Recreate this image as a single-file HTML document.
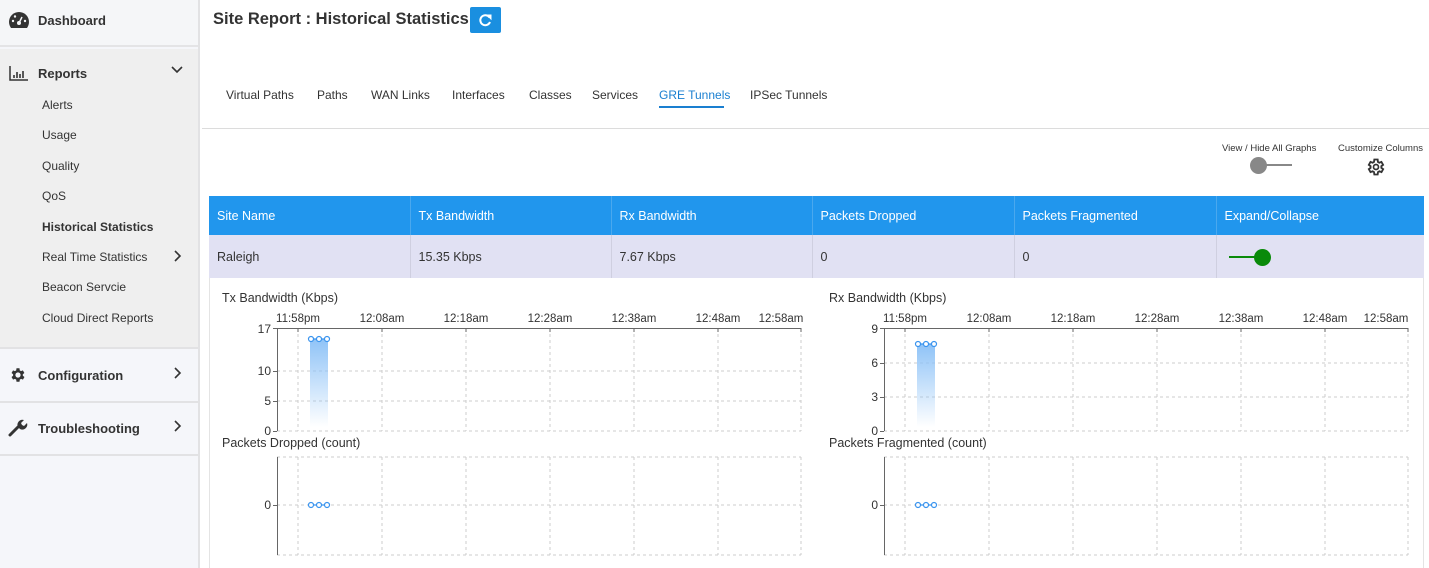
<!DOCTYPE html>
<html><head><meta charset="utf-8"><style>
*{margin:0;padding:0;box-sizing:border-box}
body{width:1429px;height:568px;overflow:hidden;font-family:"Liberation Sans",sans-serif;background:#fff;position:relative;color:#333}
.a{position:absolute;white-space:nowrap}
.sb{position:absolute;left:0;top:0;width:200px;height:568px;background:#f5f6fa;border-right:2px solid #e2e2e4}
.sub{font-size:12px;color:#333;left:42px}
.hd{font-size:13px;font-weight:bold;color:#333;left:38px}
.tab{font-size:12px;color:#333;top:88px}
th,td{font-size:12.5px;text-align:left;padding-left:8px;font-weight:normal}
</style></head><body>
<div class="sb">
 <div class="a" style="left:0;top:0;width:198px;height:47px;background:#f5f6f8;border-bottom:2px solid #e4e4e6"></div>
 <div class="a" style="left:0;top:49px;width:198px;height:300px;background:#efefef;border-bottom:2px solid #e2e2e4"></div>
 <div class="a" style="left:0;top:401px;width:198px;height:2px;background:#e2e2e4"></div>
 <div class="a" style="left:0;top:454px;width:198px;height:2px;background:#e2e2e4"></div>
 <svg class="a" style="left:8px;top:10px" width="22" height="20" viewBox="0 0 22 20"><path d="M11 2A10 10 0 0 0 1 12c0 2.5 1 4.5 2 6h16c1-1.5 2-3.5 2-6A10 10 0 0 0 11 2z" fill="#333"/><circle cx="11" cy="13" r="2" fill="#f5f6f8"/><path d="M11 13l3-6" stroke="#f5f6f8" stroke-width="1.5"/><circle cx="5" cy="11" r="1.2" fill="#f5f6f8"/><circle cx="7" cy="6.5" r="1.2" fill="#f5f6f8"/><circle cx="17" cy="11" r="1.2" fill="#f5f6f8"/></svg>
 <div class="a hd" style="top:13px">Dashboard</div>
 <svg class="a" style="left:9px;top:66px" width="19" height="15" viewBox="0 0 19 15"><path d="M1 0v14h18" stroke="#333" stroke-width="1.5" fill="none"/><path d="M5 12v-3M8 12v-6M11 12v-4M14 12v-7" stroke="#333" stroke-width="1.6"/></svg>
 <div class="a hd" style="top:66px">Reports</div>
 <svg class="a" style="left:171px;top:66px" width="12" height="8"><path d="M1 1l5 5 5-5" stroke="#333" stroke-width="1.6" fill="none"/></svg>
 <div class="a sub" style="top:98px">Alerts</div>
 <div class="a sub" style="top:128px">Usage</div>
 <div class="a sub" style="top:159px">Quality</div>
 <div class="a sub" style="top:189px">QoS</div>
 <div class="a sub" style="top:220px;font-weight:bold">Historical Statistics</div>
 <div class="a sub" style="top:250px">Real Time Statistics</div>
 <svg class="a" style="left:174px;top:250px" width="8" height="12"><path d="M1 1l5 5-5 5" stroke="#333" stroke-width="1.6" fill="none"/></svg>
 <div class="a sub" style="top:280px">Beacon Servcie</div>
 <div class="a sub" style="top:311px">Cloud Direct Reports</div>
 <svg class="a" style="left:9px;top:366px" width="18" height="18" viewBox="0 0 24 24"><path fill="#333" d="M19.4 13a7.5 7.5 0 0 0 0-2l2.1-1.6-2-3.5-2.5 1a7.6 7.6 0 0 0-1.7-1L15 3h-4l-.4 2.9a7.6 7.6 0 0 0-1.7 1l-2.5-1-2 3.5L6.5 11a7.5 7.5 0 0 0 0 2l-2.1 1.6 2 3.5 2.5-1a7.6 7.6 0 0 0 1.7 1L11 21h4l.4-2.9a7.6 7.6 0 0 0 1.7-1l2.5 1 2-3.5zM13 15.5a3.5 3.5 0 1 1 0-7 3.5 3.5 0 0 1 0 7z" transform="translate(-1 0)"/></svg>
 <div class="a hd" style="top:368px">Configuration</div>
 <svg class="a" style="left:174px;top:367px" width="8" height="12"><path d="M1 1l5 5-5 5" stroke="#333" stroke-width="1.6" fill="none"/></svg>
 <svg class="a" style="left:8px;top:418px" width="20" height="20" viewBox="0 0 20 20"><path d="M2 17l8-8" stroke="#333" stroke-width="3" stroke-linecap="round"/><path d="M10 9a5 5 0 0 1 6-7l-3 3 1 2 2 1 3-3a5 5 0 0 1-7 6z" fill="#333"/></svg>
 <div class="a hd" style="top:421px">Troubleshooting</div>
 <svg class="a" style="left:174px;top:420px" width="8" height="12"><path d="M1 1l5 5-5 5" stroke="#333" stroke-width="1.6" fill="none"/></svg>
</div>

<div class="a" style="left:213px;top:10px;font-size:16.5px;font-weight:bold;color:#333">Site Report : Historical Statistics</div>
<div class="a" style="left:470px;top:7px;width:31px;height:26px;background:#1a8fe0;border-radius:2px"></div>
<svg class="a" style="left:477px;top:12px" width="17" height="17" viewBox="0 0 17 17"><path d="M12.5 5.5A5 5 0 1 0 13 10" stroke="#fff" stroke-width="2" fill="none"/><path d="M10 3h4v4z" fill="#fff" stroke="#fff"/></svg>

<div class="a tab" style="left:226px">Virtual Paths</div>
<div class="a tab" style="left:317px">Paths</div>
<div class="a tab" style="left:371px">WAN Links</div>
<div class="a tab" style="left:452px">Interfaces</div>
<div class="a tab" style="left:529px">Classes</div>
<div class="a tab" style="left:592px">Services</div>
<div class="a tab" style="left:659px;color:#1a7fd0">GRE Tunnels</div>
<div class="a" style="left:659px;top:106px;width:65px;height:2px;background:#1a7fd0"></div>
<div class="a tab" style="left:750px">IPSec Tunnels</div>
<div class="a" style="left:202px;top:128px;width:1227px;height:1px;background:#dcdcdc"></div>

<div class="a" style="left:1222px;top:143px;font-size:9.5px;color:#333">View / Hide All Graphs</div>
<div class="a" style="left:1258px;top:164px;width:34px;height:2px;background:#888"></div>
<div class="a" style="left:1250px;top:157px;width:17px;height:17px;border-radius:50%;background:#888"></div>
<div class="a" style="left:1338px;top:143px;font-size:9.5px;color:#333">Customize Columns</div>
<svg class="a" style="left:1366px;top:157px" width="20" height="20" viewBox="0 0 24 24"><path fill="none" stroke="#333" stroke-width="2.2" d="M19.4 13a7.5 7.5 0 0 0 0-2l2.1-1.6-2-3.5-2.5 1a7.6 7.6 0 0 0-1.7-1L15 3h-4l-.4 2.9a7.6 7.6 0 0 0-1.7 1l-2.5-1-2 3.5L6.5 11a7.5 7.5 0 0 0 0 2l-2.1 1.6 2 3.5 2.5-1a7.6 7.6 0 0 0 1.7 1L11 21h4l.4-2.9a7.6 7.6 0 0 0 1.7-1l2.5 1 2-3.5z" transform="translate(-1 0)"/><circle cx="12" cy="12" r="3" fill="none" stroke="#333" stroke-width="2"/></svg>

<table class="a" style="left:209px;top:196px;width:1215px;border-collapse:collapse;table-layout:fixed">
<tr style="background:#2196ed;color:#fff;height:39px"><th style="width:201px">Site Name</th><th style="width:201px;border-left:1px solid #4aa8ee">Tx Bandwidth</th><th style="width:201px;border-left:1px solid #4aa8ee">Rx Bandwidth</th><th style="width:202px;border-left:1px solid #4aa8ee">Packets Dropped</th><th style="width:202px;border-left:1px solid #4aa8ee">Packets Fragmented</th><th style="border-left:1px solid #4aa8ee">Expand/Collapse</th></tr>
<tr style="background:#e1e1f3;height:43px"><td>Raleigh</td><td style="border-left:1px solid #cfcfe0">15.35 Kbps</td><td style="border-left:1px solid #cfcfe0">7.67 Kbps</td><td style="border-left:1px solid #cfcfe0">0</td><td style="border-left:1px solid #cfcfe0">0</td><td style="border-left:1px solid #cfcfe0"></td></tr>
</table>
<div class="a" style="left:1229px;top:256px;width:30px;height:2px;background:#0a8a0a"></div>
<div class="a" style="left:1254px;top:249px;width:17px;height:17px;border-radius:50%;background:#0a8a0a"></div>
<div class="a" style="left:209px;top:278px;width:1px;height:290px;background:#e4e4e4"></div>
<div class="a" style="left:1423px;top:278px;width:1px;height:290px;background:#e4e4e4"></div>

<svg class="a" style="left:0;top:0" width="1429" height="568" font-family="Liberation Sans, sans-serif">
<defs><linearGradient id="g" x1="0" y1="0" x2="0" y2="1"><stop offset="0" stop-color="#8fc3f7"/><stop offset="1" stop-color="#8fc3f7" stop-opacity="0"/></linearGradient></defs>
<g font-size="12.5" fill="#333">
<text x="222" y="302">Tx Bandwidth (Kbps)</text>
<text x="222" y="447">Packets Dropped (count)</text>
<text x="829" y="302">Rx Bandwidth (Kbps)</text>
<text x="829" y="447">Packets Fragmented (count)</text>
</g>
<g font-size="11.5" fill="#333" text-anchor="middle">
<text x="298" y="322">11:58pm</text><text x="382" y="322">12:08am</text><text x="466" y="322">12:18am</text><text x="550" y="322">12:28am</text><text x="634" y="322">12:38am</text><text x="718" y="322">12:48am</text><text x="781" y="322">12:58am</text>
<text x="905" y="322">11:58pm</text><text x="989" y="322">12:08am</text><text x="1073" y="322">12:18am</text><text x="1157" y="322">12:28am</text><text x="1241" y="322">12:38am</text><text x="1325" y="322">12:48am</text><text x="1386" y="322">12:58am</text>
</g>
<g font-size="12" fill="#333" text-anchor="end">
<text x="271" y="333">17</text><text x="271" y="375">10</text><text x="271" y="405">5</text><text x="271" y="435">0</text><text x="271" y="509">0</text>
<text x="878" y="333">9</text><text x="878" y="367">6</text><text x="878" y="401">3</text><text x="878" y="435">0</text><text x="878" y="509">0</text>
</g>
<g stroke="#ccc" stroke-dasharray="3,3" fill="none">
<path d="M298 328V431M382 328V431M466 328V431M550 328V431M634 328V431M718 328V431M801 328V431M277 371H801M277 401H801M277 431H801"/>
<path d="M298 457V555M382 457V555M466 457V555M550 457V555M634 457V555M718 457V555M801 457V555M277 457H801M277 505H801M277 555H801"/>
<path d="M905 328V431M989 328V431M1073 328V431M1157 328V431M1241 328V431M1325 328V431M1408 328V431M884 363H1408M884 397H1408M884 431H1408"/>
<path d="M905 457V555M989 457V555M1073 457V555M1157 457V555M1241 457V555M1325 457V555M1408 457V555M884 457H1408M884 505H1408M884 555H1408"/>
</g>
<g stroke="#666" stroke-width="1" fill="none">
<path d="M277.5 328V431M273 328.5H801M273 371.5H277M273 401.5H277M273 431.5H277M298 328v4M382 328v4M466 328v4M550 328v4M634 328v4M718 328v4M801 328v4"/>
<path d="M277.5 457V555M273 505.5H277"/>
<path d="M884.5 328V431M880 328.5H1408M880 363.5H884M880 397.5H884M880 431.5H884M905 328v4M989 328v4M1073 328v4M1157 328v4M1241 328v4M1325 328v4M1408 328v4"/>
<path d="M884.5 457V555M880 505.5H884"/>
</g>
<rect x="310" y="339" width="18" height="88" fill="url(#g)"/>
<rect x="917" y="344" width="18" height="83" fill="url(#g)"/>
<g stroke="#3a94ee" stroke-width="1.2" fill="#fff">
<path d="M311 339H327M918 344H934M311 505H327M918 505H934"/>
<circle cx="311" cy="339" r="2.5"/><circle cx="319" cy="339" r="2.5"/><circle cx="327" cy="339" r="2.5"/>
<circle cx="918" cy="344" r="2.5"/><circle cx="926" cy="344" r="2.5"/><circle cx="934" cy="344" r="2.5"/>
<circle cx="311" cy="505" r="2.5"/><circle cx="319" cy="505" r="2.5"/><circle cx="327" cy="505" r="2.5"/>
<circle cx="918" cy="505" r="2.5"/><circle cx="926" cy="505" r="2.5"/><circle cx="934" cy="505" r="2.5"/>
</g>
</svg>
</body></html>
